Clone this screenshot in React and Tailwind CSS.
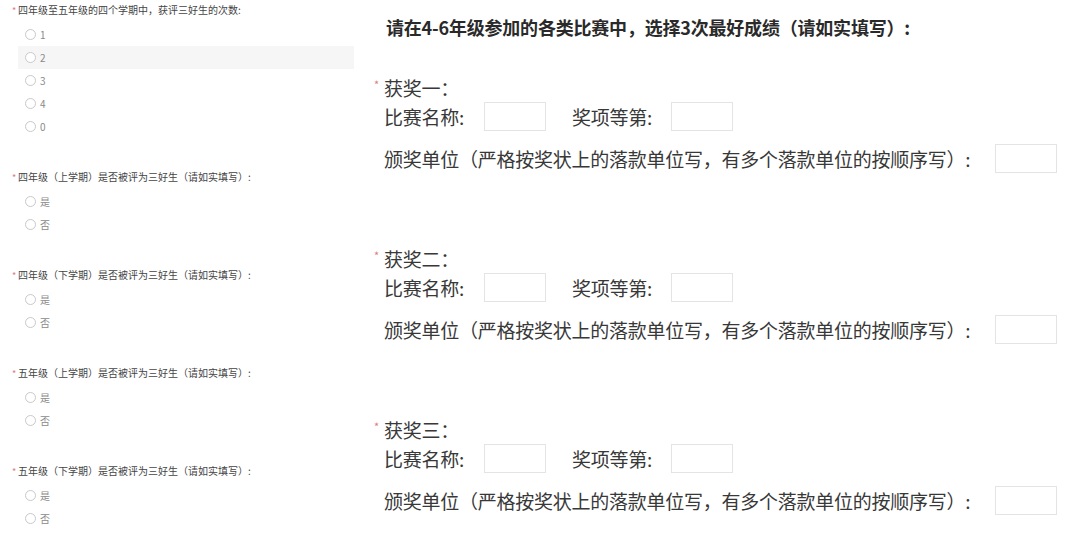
import React from 'react';

const FONT = { fontFamily: '"Noto Sans CJK SC", "Noto Sans", sans-serif' };

const leftQuestions = [
  { title: '四年级至五年级的四个学期中，获评三好生的次数:', options: ['1', '2', '3', '4', '0'], hover: 1 },
  { title: '四年级（上学期）是否被评为三好生（请如实填写）:', options: ['是', '否'] },
  { title: '四年级（下学期）是否被评为三好生（请如实填写）:', options: ['是', '否'] },
  { title: '五年级（上学期）是否被评为三好生（请如实填写）:', options: ['是', '否'] },
  { title: '五年级（下学期）是否被评为三好生（请如实填写）:', options: ['是', '否'] },
];

const awards = ['获奖一：', '获奖二：', '获奖三：'];

const Radio = ({ label, active }) => (
  <div className={`flex items-center h-[23px] pl-[7px] ${active ? 'bg-[#f6f6f6]' : ''}`}>
    <span className="w-[11px] h-[11px] rounded-full border border-[#c9c9c9] bg-white" />
    <span className="ml-[4px] text-[10px] text-[#8a8a8a] leading-none">{label}</span>
  </div>
);

const Box = () => <div className="w-[62px] h-[29px] border border-[#e4e4e4] bg-white" />;

const AwardBlock = ({ title }) => (
  <div className="flex flex-col">
    <div className="relative h-[24px] flex items-center pl-[10px] text-[19px] tracking-[-0.25px] text-[#383838] leading-none">
      <span className="absolute left-0 top-[4px] text-[11px] text-[#e07a7a] leading-none">*</span>
      {title}
    </div>
    <div className="mt-[2px] h-[30px] flex items-center pl-[10px] text-[19px] tracking-[-0.25px] text-[#383838] leading-none">
      <span className="w-[100px]">比赛名称:</span>
      <Box />
      <span className="ml-[26px] w-[99px]">奖项等第:</span>
      <Box />
    </div>
    <div className="mt-[12px] h-[30px] flex items-center pl-[10px] text-[19px] tracking-[-0.25px] text-[#383838] leading-none">
      <span className="w-[611px] whitespace-nowrap">颁奖单位（严格按奖状上的落款单位写，有多个落款单位的按顺序写）:</span>
      <Box />
    </div>
  </div>
);

export default function App() {
  return (
    <div className="w-[1080px] h-[533px] overflow-hidden bg-white flex" style={FONT}>
      <div className="w-[360px] shrink-0 flex flex-col gap-[29px] pl-[12px] pr-[6px]">
        {leftQuestions.map((q, i) => (
          <div key={i} className="flex flex-col">
            <div className="h-[20px] flex items-center text-[10px] text-[#444] leading-none whitespace-nowrap">
              <span className="w-[6px] text-[#e07a7a] text-[9px]">*</span>
              {q.title}
            </div>
            <div className="mt-[3px] ml-[6px] flex flex-col">
              {q.options.map((o, j) => (
                <Radio key={j} label={o} active={q.hover === j} />
              ))}
            </div>
          </div>
        ))}
      </div>
      <div className="flex-1 pl-[14px] pt-[15px] flex flex-col">
        <div className="h-[24px] flex items-center pl-[12px] text-[18px] font-bold tracking-[-0.2px] text-[#2a2a2a] leading-none whitespace-nowrap">
          请在4-6年级参加的各类比赛中，选择3次最好成绩（请如实填写）:
        </div>
        <div className="mt-[36px] flex flex-col gap-[73px]">
          {awards.map((a) => (
            <AwardBlock key={a} title={a} />
          ))}
        </div>
      </div>
    </div>
  );
}
